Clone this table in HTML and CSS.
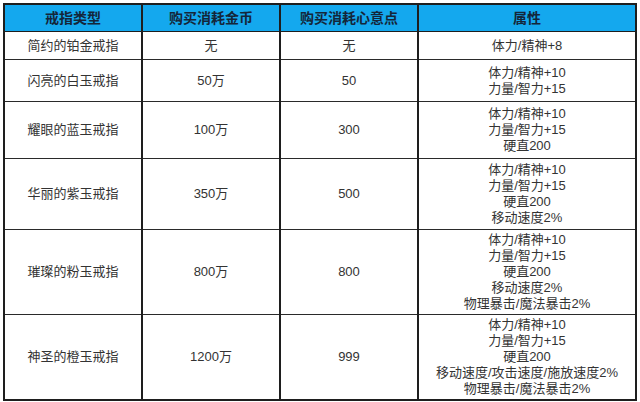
FILE: index.html
```html
<!DOCTYPE html>
<html lang="zh">
<head>
<meta charset="utf-8">
<link rel="stylesheet" href="styles.css">
</head>
<body>
<table class="rings">
  <colgroup>
    <col class="c1"><col class="c2"><col class="c3"><col class="c4">
  </colgroup>
  <thead>
    <tr class="h">
      <th>戒指类型</th><th>购买消耗金币</th><th>购买消耗心意点</th><th>属性</th>
    </tr>
  </thead>
  <tbody>
    <tr class="r1"><td>简约的铂金戒指</td><td>无</td><td>无</td><td>体力/精神+8</td></tr>
    <tr class="r2"><td>闪亮的白玉戒指</td><td>50万</td><td>50</td><td>体力/精神+10<br>力量/智力+15</td></tr>
    <tr class="r3"><td>耀眼的蓝玉戒指</td><td>100万</td><td>300</td><td>体力/精神+10<br>力量/智力+15<br>硬直200</td></tr>
    <tr class="r4"><td>华丽的紫玉戒指</td><td>350万</td><td>500</td><td>体力/精神+10<br>力量/智力+15<br>硬直200<br>移动速度2%</td></tr>
    <tr class="r5"><td>璀璨的粉玉戒指</td><td>800万</td><td>800</td><td>体力/精神+10<br>力量/智力+15<br>硬直200<br>移动速度2%<br>物理暴击/魔法暴击2%</td></tr>
    <tr class="r6"><td>神圣的橙玉戒指</td><td>1200万</td><td>999</td><td>体力/精神+10<br>力量/智力+15<br>硬直200<br>移动速度/攻击速度/施放速度2%<br>物理暴击/魔法暴击2%</td></tr>
  </tbody>
</table>
</body>
</html>
```
FILE: styles.css
```css
html, body {
  margin: 0;
  padding: 0;
  background: #ffffff;
}
body {
  padding: 3px 0 0 3px;
  font-family: "Liberation Sans", "Noto Sans CJK SC", sans-serif;
}
.rings {
  border-collapse: collapse;
  table-layout: fixed;
  width: 632px;
  border: 2px solid #1e1e1e;
}
.c1, .c2, .c3 { width: 138px; }
.c4 { width: 218px; }
.rings th,
.rings td {
  text-align: center;
  vertical-align: middle;
  padding: 0;
  border-left: 2px solid #1e1e1e;
  border-right: 2px solid #1e1e1e;
  border-top: 1px solid #2a2a2a;
  border-bottom: 1px solid #2a2a2a;
}
.rings th {
  background: #14a8ee;
  color: #14263a;
  font-size: 14px;
  font-weight: bold;
  height: 26px;
  line-height: 16px;
  border-bottom: 1px solid #1e1e1e;
}
.rings td {
  color: #333333;
  font-size: 13px;
  line-height: 16px;
}
.r1 td { height: 27px; }
.r2 td { height: 41px; }
.r3 td { height: 56px; }
.r4 td { height: 70px; }
.r5 td { height: 84px; }
.r6 td { height: 84px; }
```
